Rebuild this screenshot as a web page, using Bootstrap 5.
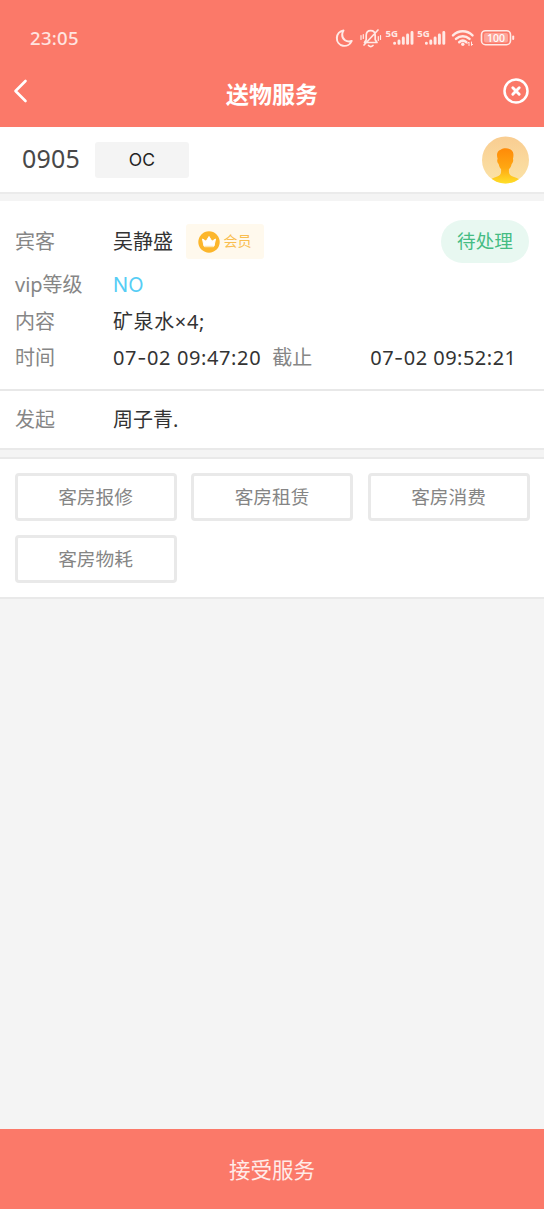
<!DOCTYPE html>
<html lang="zh-CN">
<head>
<meta charset="utf-8">
<meta name="viewport" content="width=device-width, initial-scale=1">
<title>送物服务</title>
<link href="https://cdn.jsdelivr.net/npm/bootstrap@5.3.0/dist/css/bootstrap.min.css" rel="stylesheet">
<style>
  body { font-family: "Noto Sans", "Noto Sans CJK SC", sans-serif; background: #f4f4f4; color: #333; font-size: 20px; line-height: 36px; }
  .cjk { font-family: "Noto Sans CJK SC", sans-serif; }
  .wide { font-family: Inter, "Noto Sans CJK SC", sans-serif; }
  .top-area { background: #fb7969; height: 127px; color: #fff; }
  .status-bar { height: 76px; padding: 0 29px 0 30px; }
  .clock { font-size: 18.5px; letter-spacing: .3px; font-weight: 500; color: #ffe4e0; }
  .title-bar { display: grid; grid-template-columns: 40px 1fr 40px; height: 32px; padding: 0 15px 0 13px; margin-top: -1px; }
  .title-bar svg { margin-top: -5px; }
  .page-title { font-size: 23px; font-weight: 700; padding-left: 2px; }
  .room-bar { height: 67px; padding: 0 15px 0 22px; border-bottom: 2px solid #ebebeb; }
  .room-no { font-size: 25px; color: #484848; letter-spacing: .2px; width: 73px; padding-bottom: 3px; }
  .room-state { width: 94px; height: 36px; background: #f4f4f4; border-radius: 3px; font-size: 17.5px; color: #222; letter-spacing: .2px; }
  .details { margin-top: 7px; height: 190px; padding: 18px 15px 0; border-bottom: 2px solid #e8e8e8; }
  .tag-name { color: #868686; width: 98px; flex: none; }
  .guest { height: 45px; }
  .vip-row { height: 41px; }
  .info-row { height: 36px; }
  .info-row > span { margin-top: -2px; }
  .vip-value { color: #56cdf5; letter-spacing: .3px; }
  .time-text { letter-spacing: .62px; white-space: nowrap; }
  .until { width: 109px; padding-left: 11px; }
  .until + .time-text { letter-spacing: .48px; }
  .member { width: 78px; height: 35px; margin-left: 13px; background: #fff9ed; border-radius: 3px; color: #f9be50; font-size: 14px; }
  .member span, .pending span { margin-top: -3px; }
  .member svg { margin-left: -1px; }
  .pending { width: 88px; height: 43px; background: #e8f8f1; color: #45bc83; font-size: 18.6px; }
  .starter { height: 59px; padding: 0 15px; border-bottom: 2px solid #e9e9e9; }
  .actions { margin-top: 7px; height: 142px; border-top: 2px solid #e9e9e9; border-bottom: 2px solid #e9e9e9; padding: 14px 14.5px; display: grid; grid-template-columns: repeat(3, 1fr); grid-auto-rows: 47.5px; gap: 14.5px; }
  .act { border: 3px solid #e9e9e9; border-radius: 4px; color: #858585; font-size: 18.7px; padding: 0 0 1px; background: #fff; line-height: 1; }
  .accept { height: 80px; background: #fb7969; color: #ffebe8; font-size: 21.5px; }
</style>
</head>
<body class="d-flex flex-column min-vh-100">
<header class="top-area">
  <div class="status-bar d-flex align-items-center justify-content-between">
    <span class="clock">23:05</span>
    <svg width="180" height="24" viewBox="335 26 180 24" fill="none" stroke="#ffe9e5" stroke-width="2" stroke-linecap="round" stroke-linejoin="round">
      <path d="M343.500 30.500a7.700 7.700 0 1 0 8.200 10.500c-5 1.600-9.700-1.500-9.500-6.400 0-1.600.5-3 1.300-4.100z"/>
      <path d="M364.500 42.500h12.500l-1.800-2.800v-4.200c0-3-2-4.800-4.500-4.800s-4.500 1.800-4.500 4.800v4.200zM368.500 45.500c1.300 1.200 3.200 1.200 4.500 0M378 30L364 45" stroke-width="1.700"/>
      <path d="M361 35.500v4M363.300 34.500v4M378.300 36.500v4M380.500 35.500v4" stroke-width="1.200"/>
      <g stroke="none" fill="#ffe9e5" font-family="Noto Sans, sans-serif" font-weight="700" font-size="9.500">
        <text x="385.500" y="36.500" textLength="12.500" lengthAdjust="spacingAndGlyphs">5G</text>
        <text x="417.200" y="36.500" textLength="12.500" lengthAdjust="spacingAndGlyphs">5G</text>
      </g>
      <path d="M394.600 43.200v.2M399 41v2.400M403.300 38v5.400M407.600 35v8.400M412 32.500v10.900M426.400 43.200v.2M430.800 41v2.400M435.100 38v5.400M439.400 35v8.400M443.800 32.500v10.900" stroke-width="2.900"/>
      <path d="M453 35.300c5.600-5.300 13.900-5.300 19.500 0M456 38.900c4-3.700 9.500-3.700 13.500 0M459.200 42.200c2.200-1.900 5-1.900 7.200 0" stroke-width="2.500"/>
      <circle cx="462.800" cy="44.200" r="1.700" fill="#ffe9e5" stroke="none"/>
      <path d="M469 45.500v-3.500l-1.200 1.200M471.500 42v3.500l1.200-1.200" stroke-width="1"/>
      <rect x="481.500" y="30.700" width="29" height="14" rx="4" stroke-width="1.600"/>
      <rect x="484" y="33" width="24" height="9.500" rx="2" fill="#fda398" stroke="none"/>
      <path d="M513.200 36.500v2.500" stroke-width="2"/>
      <text x="487" y="41.800" font-family="Noto Sans, sans-serif" font-weight="500" font-size="11" fill="#fff" stroke="none" textLength="18" lengthAdjust="spacingAndGlyphs">100</text>
    </svg>
  </div>
  <div class="title-bar align-items-center">
    <svg width="16" height="24" viewBox="0 0 16 24" fill="none" stroke="#fff" stroke-width="2.600" stroke-linecap="round" stroke-linejoin="round"><path d="M12.500 2L2.500 12l10 10"/></svg>
    <div class="page-title cjk text-center">送物服务</div>
    <svg class="ms-auto" width="26" height="26" viewBox="0 0 26 26" fill="none" stroke="#fff" stroke-linecap="round"><circle cx="13" cy="13" r="11.500" stroke-width="2.500"/><path d="M9.800 9.800l6.400 6.400M16.200 9.800l-6.400 6.400" stroke-width="2.900"/></svg>
  </div>
</header>

<section class="room-bar bg-white d-flex align-items-center">
  <div class="room-no">0905</div>
  <div class="room-state wide d-flex align-items-center justify-content-center">OC</div>
  <svg class="ms-auto" width="47" height="48" viewBox="0 0 48 48">
    <defs>
      <linearGradient id="sky" x2="0" y2="1"><stop stop-color="#f9cd91"/><stop offset="1" stop-color="#fbe3a7"/></linearGradient>
      <linearGradient id="person" x2="0" y2="1"><stop stop-color="#ff8a08"/><stop offset=".55" stop-color="#ffa812"/><stop offset="1" stop-color="#ffe32a"/></linearGradient>
      <clipPath id="disc"><circle cx="24" cy="24" r="24"/></clipPath>
    </defs>
    <circle cx="24" cy="24" r="24" fill="url(#sky)"/>
    <path clip-path="url(#disc)" fill="url(#person)" d="M16 23c-1.500-5-.5-8.500 3-9.500 4-2.500 10-1.500 12 1.500 1.500 2 1.300 5 .6 8 .7 1 0 4-1.300 5-.5 2.700-1.600 4-2.800 5.500v2.500c0 3 1.800 4 4.500 5 3 1 5.500 2 7 4v4H8v-4c1.500-2 4-3 7-4 2.700-1 4.500-2 4.500-5v-2.500c-1-1.500-2-2.800-2.500-5.500-1.300-1-2-4-1-5z"/>
  </svg>
</section>

<section class="details bg-white">
  <div class="guest d-flex align-items-center">
    <span class="tag-name">宾客</span><span>吴静盛</span>
    <span class="member cjk d-flex align-items-center justify-content-center">
      <svg class="me-1" width="22" height="22" viewBox="0 0 22 22"><circle cx="11" cy="11" r="10.700" fill="#fcb62b"/><path d="M6 15.200L4.500 8l3.600 2.300L11 5.500l2.900 4.800L17.500 8 16 15.200z" fill="#fff" stroke="#fff" stroke-linejoin="round"/><path d="M6.500 15.500h9" stroke="#fde5b0" stroke-width="1.500"/></svg><span>会员</span>
    </span>
    <span class="pending cjk rounded-pill ms-auto d-flex align-items-center justify-content-center"><span>待处理</span></span>
  </div>
  <div class="vip-row d-flex align-items-center"><span class="tag-name">vip等级</span><span class="wide vip-value">NO</span></div>
  <div class="info-row d-flex align-items-center"><span class="tag-name">内容</span><span class="time-text">矿泉水×4;</span></div>
  <div class="info-row d-flex align-items-center">
    <span class="tag-name">时间</span><span class="time-text">07<span class="wide">-</span>02 09:47:20</span>
    <span class="tag-name until">截止</span><span class="time-text">07<span class="wide">-</span>02 09:52:21</span>
  </div>
</section>
<section class="starter bg-white d-flex align-items-center"><span class="tag-name">发起</span><span>周子青.</span></section>

<section class="actions bg-white">
  <button class="act cjk">客房报修</button>
  <button class="act cjk">客房租赁</button>
  <button class="act cjk">客房消费</button>
  <button class="act cjk">客房物耗</button>
</section>

<footer class="accept cjk mt-auto d-flex align-items-center justify-content-center">接受服务</footer>
<script src="https://cdn.jsdelivr.net/npm/bootstrap@5.3.0/dist/js/bootstrap.bundle.min.js"></script>
</body>
</html>
